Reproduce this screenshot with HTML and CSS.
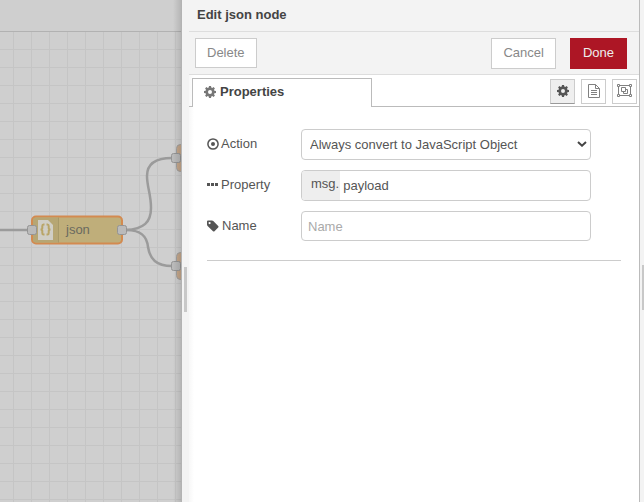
FILE: index.html
```html
<!DOCTYPE html>
<html lang="en">
<head>
<meta charset="utf-8">
<title>Edit json node</title>
<link rel="stylesheet" href="styles.css">
</head>
<body>
<div class="editor">
  <main class="workspace">
    <div class="workspace-tabs"></div>
    <svg class="canvas" viewBox="0 32 182 470" preserveAspectRatio="xMinYMin slice" role="img" aria-label="Flow">
      <defs>
        <pattern id="grid" x="13" y="49" width="18" height="18" patternUnits="userSpaceOnUse">
          <path class="grid-line" d="M0 .5H18M.5 0V18"/>
        </pattern>
      </defs>
      <rect y="32" width="182" height="470" fill="url(#grid)"/>
      <g class="wire">
        <path d="M0 230H30"/>
        <path d="M126 230C144 229 151 222 151 208C151 194 147 187 147 176C147 163 156 158 172 158"/>
        <path d="M126 230C142 230 147 237 148 247C150 259 156 266 172 266"/>
      </g>
      <g class="next-node">
        <rect x="176.500" y="144.500" width="30" height="27" rx="4"/>
        <rect x="176.500" y="252.500" width="30" height="27" rx="4"/>
      </g>
      <rect class="json-node" x="32" y="216.500" width="90" height="27" rx="4"/>
      <path class="node-shade" d="M36 217.500H58V242.500H36Q33 242.500 33 239.500V220.500Q33 217.500 36 217.500Z"/>
      <path class="node-divider" d="M58.500 217.500V242.500"/>
      <path class="node-paper" d="M38 220H48L53 225V240H38Z"/>
      <path class="node-brace" d="M44.500 224.500H43.500Q42.300 224.500 42.300 226V228Q42.300 229.500 40.500 229.500Q42.300 229.500 42.300 231V233Q42.300 234.500 43.500 234.500H44.500M46.500 224.500H47.500Q48.700 224.500 48.700 226V228Q48.700 229.500 50.500 229.500Q48.700 229.500 48.700 231V233Q48.700 234.500 47.500 234.500H46.500"/>
      <text class="node-label" x="66" y="234">json</text>
      <g class="port">
        <rect x="27.500" y="225.500" width="9" height="9" rx="2"/>
        <rect x="117.500" y="225.500" width="9" height="9" rx="2"/>
        <rect x="171.500" y="153.500" width="9" height="9" rx="2"/>
        <rect x="171.500" y="261.500" width="9" height="9" rx="2"/>
      </g>
    </svg>
  </main>
  <div class="separator"><span class="grip"></span></div>
  <section class="tray">
    <header class="tray-header">Edit json node</header>
    <div class="tray-toolbar">
      <button class="button delete" type="button">Delete</button>
      <button class="button cancel" type="button">Cancel</button>
      <button class="button done" type="button">Done</button>
    </div>
    <nav class="tabs">
      <a class="tab" href="#properties">
        <svg class="icon gear" viewBox="0 0 12 12"><use href="#gear-shape"/></svg>Properties</a>
      <div class="tab-tools">
        <button class="tool active" type="button" aria-label="Properties">
          <svg class="icon" viewBox="0 0 12 12"><path id="gear-shape" fill-rule="evenodd" d="M5 0H7L7.300 1.600L8.300 2L9.600 1.100L10.900 2.400L10 3.700L10.400 4.700L12 5V7L10.400 7.300L10 8.300L10.900 9.600L9.600 10.900L8.300 10L7.300 10.400L7 12H5L4.700 10.400L3.700 10L2.400 10.900L1.100 9.600L2 8.300L1.600 7.300L0 7V5L1.600 4.700L2 3.700L1.100 2.400L2.400 1.100L3.700 2L4.700 1.600ZM6 4A2 2 0 1 0 6 8A2 2 0 1 0 6 4Z"/></svg>
        </button>
        <button class="tool" type="button" aria-label="Description">
          <svg class="icon outline file" viewBox="0 0 12 14"><path d="M.5.500H7.500L11.500 4.500V13.500H.5ZM7.500.500V4.500H11.500M3 6.500H9M3 8.500H9M3 10.500H9"/></svg>
        </button>
        <button class="tool" type="button" aria-label="Appearance">
          <svg class="icon outline group" viewBox="0 0 15 13"><path d="M2.500 1.500H12.500M2.500 11.500H12.500M1.500 2.500V10.500M13.500 2.500V10.500M.5.500H2.500V2.500H.5ZM12.500.500H14.500V2.500H12.500ZM.5 10.500H2.500V12.500H.5ZM12.500 10.500H14.500V12.500H12.500ZM4.500 3.500H8.500V7.500H4.500ZM8.500 5.500H10.500V9.500H6.500V7.500"/></svg>
        </button>
      </div>
    </nav>
    <form class="form" id="properties">
      <div class="row">
        <label for="action"><svg class="icon" viewBox="0 0 12 12"><circle cx="6" cy="6" r="5.100" fill="none" stroke="currentColor" stroke-width="1.500"/><circle cx="6" cy="6" r="2"/></svg>Action</label>
        <div class="select-wrap">
          <select class="field" id="action"><option>Always convert to JavaScript Object</option></select>
          <svg class="chevron" viewBox="0 0 10 6"><path d="M1 1L5 4.700L9 1"/></svg>
        </div>
      </div>
      <div class="row">
        <label for="property"><svg class="icon" viewBox="0 0 12 12"><path d="M0 4H3V7H0ZM4 4H7V7H4ZM8 4H11V7H8Z"/></svg>Property</label>
        <div class="field typed">
          <button class="type" type="button">msg.</button>
          <input id="property" type="text" value="payload">
        </div>
      </div>
      <div class="row">
        <label for="name"><svg class="icon tag" viewBox="0 0 12 12"><path fill-rule="evenodd" d="M0 1.500Q0 .5 1 .5H5Q5.700.500 6.300 1L11.200 6Q12 6.700 11.200 7.500L7.500 11.200Q6.700 12 6 11.200L.6 6Q0 5.400 0 4.600ZM2.600 2A1.100 1.100 0 1 0 2.600 4.200A1.100 1.100 0 1 0 2.600 2Z"/></svg>Name</label>
        <input class="field name" id="name" type="text" placeholder="Name">
      </div>
      <hr>
    </form>
  </section>
  <div class="edge"><span class="grip"></span></div>
</div>
</body>
</html>
```
FILE: styles.css
```css
* {
  box-sizing: border-box;
}

body {
  margin: 0;
  color: #555;
  font: 13px/20px "Liberation Sans", Arial, sans-serif;
}

button,
input,
select {
  color: inherit;
  font: inherit;
}

.editor {
  display: flex;
  min-height: 100vh;
  overflow: hidden;
}

/* Flow canvas, dimmed while the tray is open */
.workspace {
  position: relative;
  display: flex;
  flex-direction: column;
  flex: 0 0 182px;
  overflow: hidden;
  background: #cfcfcf;
}

.workspace::after {
  content: "";
  position: absolute;
  inset: 0 0 0 auto;
  width: 8px;
  border-right: 1px solid #b3b3b3;
  background: linear-gradient(to right, transparent, rgba(0, 0, 0, 0.12));
}

.workspace-tabs {
  height: 32px;
  border-bottom: 1px solid #b2b2b2;
}

.canvas {
  display: block;
  flex: 1;
  width: 100%;
  min-height: 0;
}

.grid-line {
  fill: none;
  stroke: #c5c5c5;
}

.wire {
  fill: none;
  stroke: #9b9b9b;
  stroke-width: 2.5;
}

.next-node {
  fill: #c6a88c;
  stroke: #a0a0a0;
}

.json-node {
  fill: #bfae7a;
  stroke: #d38a50;
  stroke-width: 2;
}

.node-shade {
  fill: #b6a674;
}

.node-divider {
  stroke: #a79969;
}

.node-paper {
  fill: #d0cec6;
}

.node-brace {
  fill: none;
  stroke: #b9a568;
  stroke-width: 2;
}

.node-label {
  fill: #6a6a60;
  font-size: 13px;
}

.port {
  fill: #bababa;
  stroke: #949494;
}

/* Resize handles */
.separator,
.edge {
  display: flex;
  flex: none;
  align-items: center;
  padding-top: 76px;
  background: #f3f3f3;
}

.separator {
  justify-content: center;
  width: 7px;
}

.edge {
  justify-content: flex-end;
  width: 5px;
  padding-top: 72px;
  border-left: 1px solid #bbb;
}

.grip {
  width: 3px;
  height: 45px;
  background: #c8c8c8;
}

.edge .grip {
  width: 2px;
}

/* Edit tray */
.tray {
  flex: 1;
  min-width: 0;
  background: linear-gradient(to right, #f7f7f7, #fff 5px);
}

.tray-header {
  height: 32px;
  padding: 5px 8px;
  border-bottom: 1px solid #ddd;
  background: #f3f3f3;
  color: #444;
  font-weight: bold;
}

.tray-toolbar {
  display: flex;
  align-items: center;
  height: 43px;
  padding: 0 12px 0 6px;
  border-bottom: 1px solid #ddd;
  background: #f3f3f3;
}

.button {
  height: 31px;
  padding: 0 11px;
  border: 1px solid #ccc;
  background: #fff;
  color: #888;
}

.delete {
  height: 30px;
}

.cancel {
  margin-left: auto;
}

.done {
  margin-left: 14px;
  padding: 0 12px;
  border-color: #ad1625;
  background: #ad1625;
  color: #eee;
}

.tabs {
  display: flex;
  align-items: flex-end;
  justify-content: space-between;
  height: 32px;
  padding: 0 2px 0 3px;
  box-shadow: inset 0 -1px #bbb;
}

.tab {
  width: 180px;
  height: 29px;
  padding: 3px 11px;
  border: 1px solid #bbb;
  border-bottom: 0;
  background: #fff;
  color: #444;
  font-weight: bold;
  text-decoration: none;
}

.icon {
  width: 12px;
  height: 12px;
  fill: currentColor;
}

.gear {
  margin-right: 4px;
  color: #777;
  vertical-align: -2px;
}

.tab-tools {
  display: flex;
  gap: 6px;
  padding-bottom: 3px;
}

.tool {
  display: flex;
  align-items: center;
  justify-content: center;
  width: 25px;
  height: 25px;
  padding: 0 0 2px;
  border: 1px solid #ccc;
  background: #fff;
  color: #808080;
}

.tool.active {
  border-bottom-color: #999;
  background: #efefef;
  color: #555;
}

.outline {
  fill: none;
  stroke: currentColor;
}

.file {
  height: 14px;
}

.group {
  width: 15px;
  height: 13px;
}

.form {
  padding: 22px 18px;
}

.row {
  display: flex;
  margin-bottom: 10px;
}

.row label {
  display: flex;
  align-items: center;
  flex: 0 0 94px;
  gap: 2px;
  height: 30px;
}

.row .tag {
  margin-right: 1px;
}

.field {
  width: 100%;
  height: 31px;
  border: 1px solid #ccc;
  border-radius: 4px;
  background: #fff;
}

.select-wrap,
.typed,
.name {
  flex: 0 1 70%;
  min-width: 0;
}

.select-wrap {
  position: relative;
}

select.field {
  display: block;
  padding: 0 24px 0 8px;
  appearance: none;
}

.chevron {
  position: absolute;
  top: 12px;
  right: 4px;
  width: 10px;
  height: 6px;
  fill: none;
  stroke: #444;
  stroke-width: 2;
  pointer-events: none;
}

.typed {
  display: flex;
  overflow: hidden;
}

.type {
  padding: 0 1px 4px 9px;
  border: 0;
  background: #eee;
}

.typed input {
  flex: 1;
  min-width: 0;
  padding: 0 3px;
  border: 0;
  background: none;
}

.name {
  height: 30px;
  padding: 0 6px;
}

.name::placeholder {
  color: #aaa;
  opacity: 1;
}

hr {
  margin: 19px 0;
  border: 0;
  border-top: 1px solid #ccc;
}
```
